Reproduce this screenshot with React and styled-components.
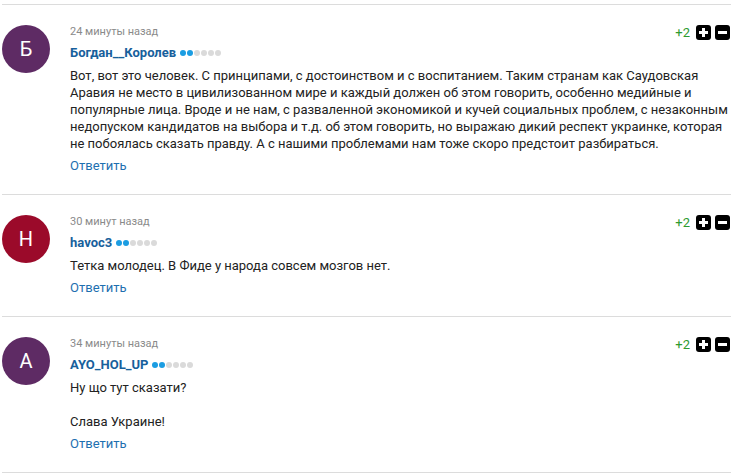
import React from 'react'
import styled, { createGlobalStyle } from 'styled-components'

const GlobalStyle = createGlobalStyle`
  body {
    margin: 0;
    background: #fff;
    font-family: Roboto, "Liberation Sans", Arial, sans-serif;
  }
`

const List = styled.div`
  width: 729px;
  margin: 4px 0 0 2px;
  border-bottom: 1px solid #dcdcdc;
`

const Comment = styled.div`
  display: flex;
  gap: 20px;
  padding: 20px 0 19px;
  border-top: 1px solid #dcdcdc;
`

const Avatar = styled.div`
  flex: none;
  width: 48px;
  height: 48px;
  border-radius: 50%;
  background: ${p => p.color};
  color: #fff;
  display: flex;
  align-items: center;
  justify-content: center;
  font-size: 20px;
`

const Body = styled.div`
  flex: 1;
  min-width: 0;
  display: flex;
  flex-direction: column;
  gap: 5px;
`

const Meta = styled.div`
  height: 14px;
  display: flex;
  align-items: center;
  justify-content: space-between;
`

const Time = styled.span`
  font-size: 11px;
  line-height: 14px;
  color: #8a8a8a;
`

const Votes = styled.div`
  display: flex;
  align-items: center;
  gap: 4px;
  margin-right: 1px;
`

const Score = styled.span`
  font-size: 13px;
  color: #2e9a2e;
  margin-right: 2px;
`

const Author = styled.div`
  display: flex;
  align-items: center;
  gap: 4px;
  font-size: 13px;
  line-height: 18px;
  font-weight: 700;
  color: #17609c;
`

const Dots = styled.span`
  display: flex;
  gap: 1px;
`

const Dot = styled.span`
  width: 6px;
  height: 6px;
  border-radius: 50%;
  background: ${p => (p.on ? '#1b9de2' : '#dadada')};
`

const Text = styled.div`
  font-size: 13px;
  line-height: 17px;
  color: #222;
  max-width: 660px;

  p {
    margin: 0;
  }
  p + p {
    margin-top: 17px;
  }
`

const Reply = styled.a`
  font-size: 13px;
  line-height: 18px;
  color: #1e6fb0;
  text-decoration: none;
  align-self: flex-start;
`

const VoteButton = ({ minus }) => (
  <svg width='15' height='15' viewBox='0 0 15 15'>
    <rect width='15' height='15' rx='3' fill='#000' />
    <rect x='3' y='6' width='9' height='3' fill='#fff' />
    {!minus && <rect x='6' y='3' width='3' height='9' fill='#fff' />}
  </svg>
)

const comments = [
  {
    letter: 'Б',
    color: '#5e2b64',
    time: '24 минуты назад',
    name: 'Богдан__Королев',
    text: [
      'Вот, вот это человек. С принципами, с достоинством и с воспитанием. Таким странам как Саудовская Аравия не место в цивилизованном мире и каждый должен об этом говорить, особенно медийные и популярные лица. Вроде и не нам, с разваленной экономикой и кучей социальных проблем, с незаконным недопуском кандидатов на выбора и т.д. об этом говорить, но выражаю дикий респект украинке, которая не побоялась сказать правду. А с нашими проблемами нам тоже скоро предстоит разбираться.'
    ]
  },
  {
    letter: 'H',
    color: '#9b0a2a',
    time: '30 минут назад',
    name: 'havoc3',
    text: ['Тетка молодец. В Фиде у народа совсем мозгов нет.']
  },
  {
    letter: 'A',
    color: '#5e2b64',
    time: '34 минуты назад',
    name: 'AYO_HOL_UP',
    text: ['Ну що тут сказати?', 'Слава Украине!']
  }
]

export default function App () {
  return (
    <>
      <GlobalStyle />
      <List>
        {comments.map((c, idx) => (
          <Comment key={idx}>
            <Avatar color={c.color}>{c.letter}</Avatar>
            <Body>
              <Meta>
                <Time>{c.time}</Time>
                <Votes>
                  <Score>+2</Score>
                  <VoteButton />
                  <VoteButton minus />
                </Votes>
              </Meta>
              <Author>
                {c.name}
                <Dots>
                  {[0, 1, 2, 3, 4, 5].map(i => <Dot key={i} on={i < 2} />)}
                </Dots>
              </Author>
              <Text>
                {c.text.map((t, i) => <p key={i}>{t}</p>)}
              </Text>
              <Reply href='#'>Ответить</Reply>
            </Body>
          </Comment>
        ))}
      </List>
    </>
  )
}
